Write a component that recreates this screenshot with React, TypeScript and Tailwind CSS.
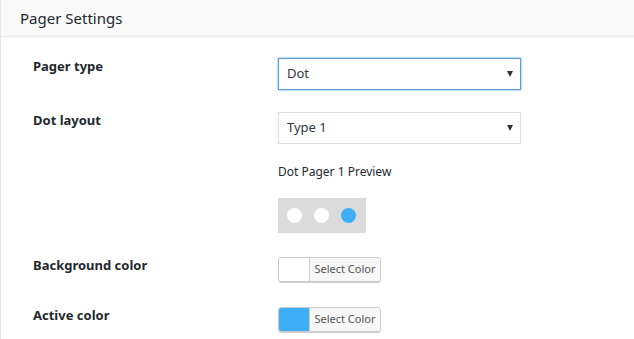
const font = { fontFamily: '"Noto Sans", "Open Sans", sans-serif' };

function SelectBox({ value, focused }: { value: string; focused?: boolean }) {
  return (
    <div
      className={
        "relative flex h-[32px] w-[243px] items-center border bg-white pl-[8px] text-[13px] text-[#32373c] " +
        (focused ? "border-[#5b9dd9] shadow-[0_0_2px_rgba(30,140,190,0.8)]" : "border-[#dddddd]")
      }
    >
      <span>{value}</span>
      <span className="absolute right-[7px] top-[12px] h-0 w-0 border-x-[3.5px] border-t-[6px] border-x-transparent border-t-[#333]" />
    </div>
  );
}

function ColorPicker({ color }: { color: string }) {
  return (
    <div className="flex h-[25px] w-[103px] overflow-hidden rounded-[3px] border border-[#cccccc] shadow-[0_1px_0_#cccccc]">
      <div className="w-[30px]" style={{ backgroundColor: color }} />
      <div className="flex flex-1 items-center justify-center border-l border-[#cccccc] bg-[#f7f7f7] text-[11px] text-[#555]">
        Select Color
      </div>
    </div>
  );
}

function Row({ label, children, className }: { label: string; children: React.ReactNode; className?: string }) {
  return (
    <div className={"flex " + (className ?? "")}>
      <div className="w-[277px] shrink-0 pl-[32px] text-[13px] font-bold leading-[16px] text-[#23282d]">{label}</div>
      <div>{children}</div>
    </div>
  );
}

export default function App() {
  return (
    <div className="h-[339px] w-[634px] overflow-hidden bg-white" style={font}>
      <div className="h-full border-l border-[#e5e5e5]">
        <div className="flex h-[37px] items-center border-b border-[#e5e5e5] bg-[#f9f9f9] pl-[19px] text-[15px] text-[#23282d]">
          Pager Settings
        </div>
        <Row label="Pager type" className="mt-[21px]">
          <SelectBox value="Dot" focused />
        </Row>
        <Row label="Dot layout" className="mt-[22px]">
          <SelectBox value="Type 1" />
          <div className="mt-[19px] text-[12px] text-[#23282d]">Dot Pager 1 Preview</div>
          <div className="mt-[17px] flex h-[35px] w-[88px] items-center gap-[12px] bg-[#dcdbdc] pl-[9px]">
            <span className="h-[15px] w-[15px] rounded-full bg-white" />
            <span className="h-[15px] w-[15px] rounded-full bg-white" />
            <span className="h-[15px] w-[15px] rounded-full bg-[#3daef5]" />
          </div>
        </Row>
        <Row label="Background color" className="mt-[24px]">
          <ColorPicker color="#ffffff" />
        </Row>
        <Row label="Active color" className="mt-[25px]">
          <ColorPicker color="#3daef5" />
        </Row>
      </div>
    </div>
  );
}
